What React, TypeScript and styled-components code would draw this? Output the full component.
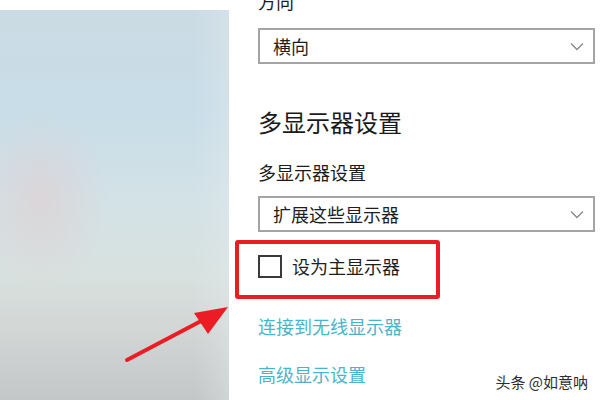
import styled, { createGlobalStyle } from "styled-components";

const Global = createGlobalStyle`
  html, body {
    margin: 0;
    padding: 0;
    background: #ffffff;
  }
  body {
    width: 600px;
    height: 400px;
    overflow: hidden;
    font-family: "Noto Sans CJK SC", "Noto Sans", sans-serif;
  }
`;

const Page = styled.div`
  position: relative;
  width: 600px;
  height: 400px;
  display: flex;
  overflow: hidden;
  background: #fff;
`;

const Wallpaper = styled.div`
  width: 229px;
  height: 390px;
  margin-top: 10px;
  flex-shrink: 0;
  background:
    radial-gradient(ellipse 70px 90px at 40px 190px, rgba(222, 208, 210, 0.7), rgba(222, 208, 210, 0) 100%),
    linear-gradient(90deg, rgba(255, 255, 255, 0) 85%, rgba(230, 236, 238, 0.35) 100%),
    linear-gradient(180deg, #cbdbe4 0%, #c8dde8 25%, #d3e2e6 50%, #d8e1df 68%, #d2d6d5 82%, #c3c7c8 100%);
`;

const Settings = styled.div`
  flex: 1;
  min-width: 0;
  padding-left: 29px;
  padding-right: 5px;
  display: flex;
  flex-direction: column;
`;

const Label = styled.div<{ $top: number }>`
  margin-top: ${(p) => p.$top}px;
  font-size: 18px;
  line-height: 24px;
  color: #1c1c1c;
`;

const Heading = styled.div`
  margin-top: 42px;
  font-size: 24px;
  line-height: 32px;
  color: #1a1a1a;
`;

const Select = styled.div<{ $top: number }>`
  margin-top: ${(p) => p.$top}px;
  height: 36px;
  box-sizing: border-box;
  border: 2px solid #a3a3a3;
  display: flex;
  align-items: center;
  justify-content: space-between;
  padding: 0 9px 0 13px;
  font-size: 18px;
  color: #1e1e1e;
`;

const Chevron = () => (
  <svg width="14" height="9" viewBox="0 0 14 9">
    <path d="M1 1.5 L7 7.5 L13 1.5" fill="none" stroke="#8a8a8a" strokeWidth="1.4" />
  </svg>
);

const CheckRow = styled.div`
  position: relative;
  margin-top: 22px;
  height: 24px;
  display: flex;
  align-items: center;
  gap: 10px;
  font-size: 18px;
  color: #1e1e1e;
`;

const Box = styled.span`
  width: 24px;
  height: 23px;
  box-sizing: border-box;
  border: 2px solid #3a3a3a;
`;

const RedFrame = styled.div`
  position: absolute;
  left: -23px;
  top: -14px;
  width: 205px;
  height: 59px;
  box-sizing: border-box;
  border: 4px solid #ec1c24;
  border-radius: 3px;
`;

const Link = styled.div<{ $top: number }>`
  margin-top: ${(p) => p.$top}px;
  font-size: 18px;
  line-height: 24px;
  color: #4ab5c9;
`;

const Arrow = styled.svg`
  position: absolute;
  left: 0;
  top: 0;
  pointer-events: none;
`;

const Watermark = styled.div`
  position: absolute;
  right: 12px;
  bottom: 8px;
  font-size: 15px;
  color: #2e2e2e;
  text-shadow: 0 0 2px #fff, 0 0 2px #fff;
`;

export default function App() {
  return (
    <>
      <Global />
      <Page>
        <Wallpaper />
        <Settings>
          <Label $top={-11}>方向</Label>
          <Select $top={15}>
            <span>横向</span>
            <Chevron />
          </Select>
          <Heading>多显示器设置</Heading>
          <Label $top={22}>多显示器设置</Label>
          <Select $top={12}>
            <span>扩展这些显示器</span>
            <Chevron />
          </Select>
          <CheckRow>
            <RedFrame />
            <Box />
            <span>设为主显示器</span>
          </CheckRow>
          <Link $top={36}>连接到无线显示器</Link>
          <Link $top={24}>高级显示设置</Link>
        </Settings>
        <Arrow width="600" height="400" viewBox="0 0 600 400">
          <path d="M127 360 L203 320" stroke="#ec1c24" strokeWidth="4" strokeLinecap="round" />
          <polygon points="228,307 194,313 208,334" fill="#ec1c24" />
        </Arrow>
        <Watermark>头条 @如意呐</Watermark>
      </Page>
    </>
  );
}
